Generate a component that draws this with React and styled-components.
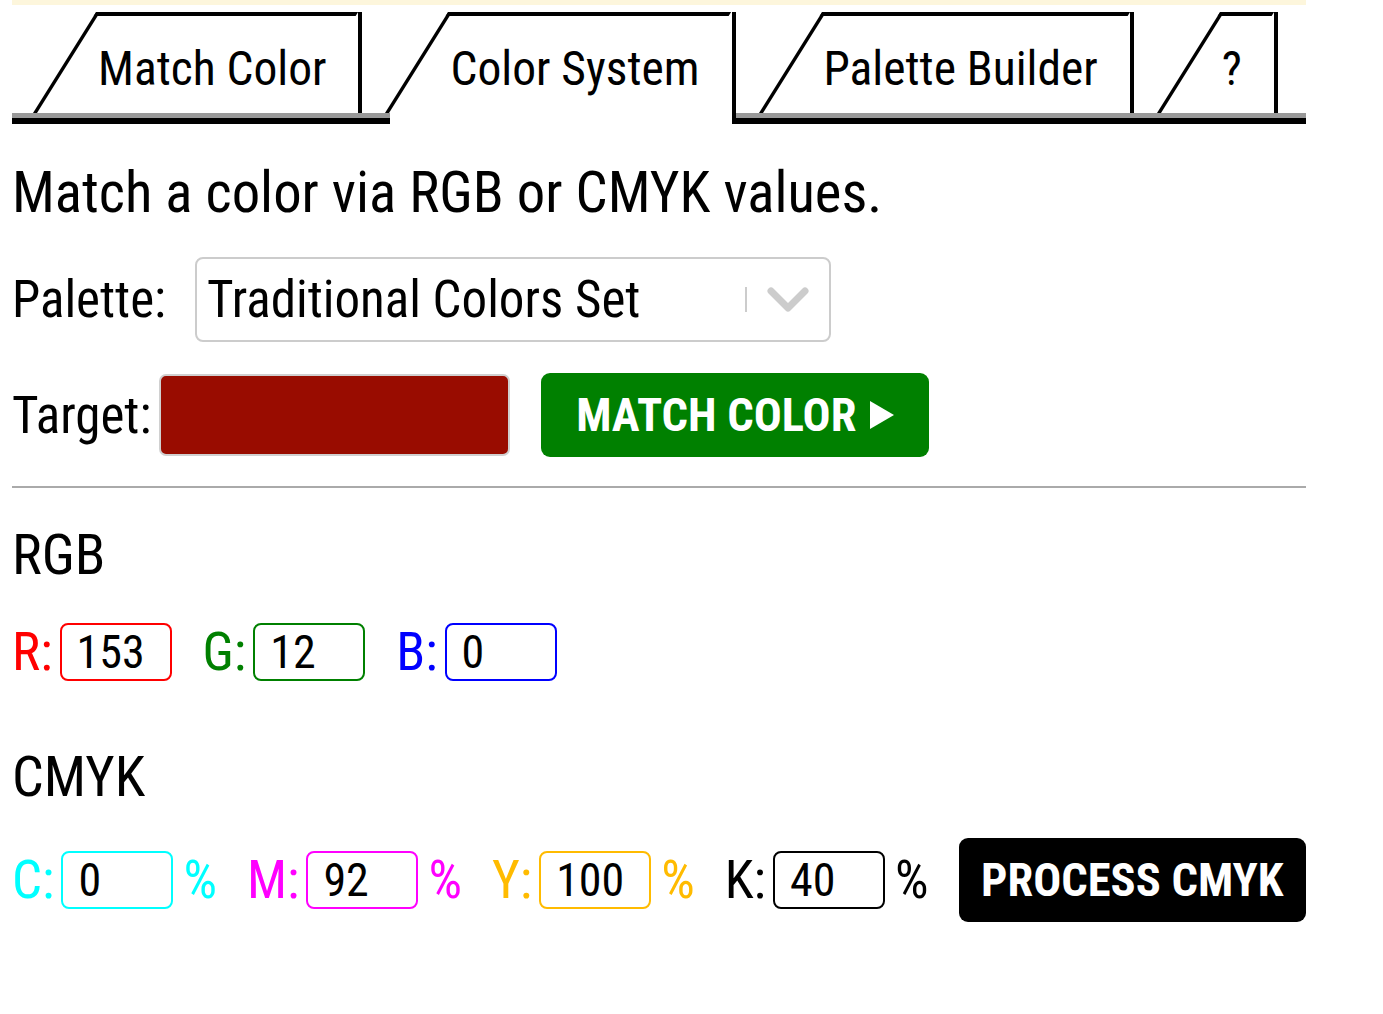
import React from "react";
import styled, { createGlobalStyle } from "styled-components";

const GlobalStyle = createGlobalStyle`
  body {
    margin: 0;
    background: #fff;
    font-family: "Roboto Condensed", "Liberation Sans Narrow", Roboto, sans-serif;
    font-stretch: condensed;
    color: #000;
  }
`;

const Page = styled.div`
  width: 1294px;
  padding: 0 12px;
`;

const TopStrip = styled.div`
  height: 5px;
  background: #fdf6dc;
`;

const TabBar = styled.div`
  display: flex;
  align-items: flex-end;
  gap: 23px;
  margin-top: 7px;
  padding: 0 0 5px 21px;
  border-bottom: 6px solid #000;
  background: linear-gradient(to top, #999 5px, transparent 5px);
`;

const Tab = styled.div`
  position: relative;
  display: flex;
  align-items: center;
  height: 101px;
  box-sizing: border-box;
  padding: 12px 32px 0 65px;
  border-right: 4px solid #000;
  background: #fff;
  font-size: 47.5px;
  white-space: nowrap;
  cursor: pointer;

  &::before {
    content: "";
    position: absolute;
    top: 0;
    bottom: 0;
    left: 0;
    right: 63px;
    border-top: 4px solid #000;
    border-left: 4px solid #000;
    transform: skewX(-32deg);
    transform-origin: bottom left;
  }

  ${(p) =>
    p.$active &&
    `
    &::after {
      content: "";
      position: absolute;
      left: 5px;
      right: -4px;
      bottom: -11px;
      height: 11px;
      background: #fff;
      border-right: 4px solid #000;
    }
  `}
`;

const Intro = styled.p`
  margin: 37px 0 0;
  font-size: 56.7px;
  line-height: 64px;
`;

const Row = styled.div`
  display: flex;
  align-items: center;
  gap: ${(p) => p.$gap || 0}px;
  margin-top: ${(p) => p.$top || 0}px;
`;

const Label = styled.span`
  font-size: ${(p) => p.$size || 53}px;
  color: ${(p) => p.$color || "#000"};
  line-height: 1;
  white-space: nowrap;
`;

const SelectBox = styled.div`
  display: flex;
  align-items: center;
  width: 636px;
  height: 85px;
  box-sizing: border-box;
  border: 2px solid #ccc;
  border-radius: 8px;
  padding-left: 10px;
`;

const SelectValue = styled.span`
  flex: 1;
  font-size: 51px;
  line-height: 1;
`;

const Separator = styled.span`
  width: 2px;
  height: 25px;
  background: #ccc;
`;

const ChevronWrap = styled.span`
  display: flex;
  padding: 0 20px;
`;

const Swatch = styled.div`
  width: 351px;
  height: 82px;
  box-sizing: border-box;
  border: 2px solid #d0d0d0;
  border-radius: 7px;
  background: ${(p) => p.$color};
`;

const ActionButton = styled.button`
  display: flex;
  align-items: center;
  justify-content: center;
  gap: 14px;
  width: ${(p) => p.$width}px;
  height: 84px;
  margin-left: ${(p) => p.$ml || 0}px;
  border: none;
  border-radius: 9px;
  background: ${(p) => p.$bg};
  color: #fff;
  font-family: inherit;
  font-stretch: condensed;
  font-weight: bold;
  font-size: 46.5px;
  white-space: nowrap;
  padding: 0;
  cursor: pointer;
`;

const Divider = styled.hr`
  margin: 29px 0 0;
  border: none;
  height: 2px;
  background: #aaa;
`;

const Heading = styled.h3`
  margin: ${(p) => p.$top}px 0 0;
  font-weight: normal;
  font-size: 56px;
  line-height: 60px;
`;

const Field = styled.div`
  display: flex;
  align-items: center;
  gap: 7px;
`;

const NumInput = styled.input`
  width: 112px;
  height: 58px;
  box-sizing: border-box;
  border: 2px solid ${(p) => p.$color};
  border-radius: 8px;
  padding: 0 0 0 15px;
  font-family: inherit;
  font-stretch: condensed;
  font-size: 46px;
  color: #000;
  background: #fff;
  outline: none;
`;

const Percent = styled.span`
  margin-left: 3px;
  font-size: 53px;
  line-height: 1;
  color: ${(p) => p.$color};
`;

const Chevron = () => (
  <svg width="42" height="26" viewBox="0 0 42 26">
    <path d="M4 4 L21 21 L38 4" fill="none" stroke="#ccc" strokeWidth="7" strokeLinecap="round" strokeLinejoin="round" />
  </svg>
);

const Play = () => (
  <svg width="24" height="28" viewBox="0 0 24 28">
    <path d="M0 0 L24 14 L0 28 Z" fill="#fff" />
  </svg>
);

const tabs = ["Match Color", "Color System", "Palette Builder", "?"];

const rgb = [
  { key: "R", value: "153", color: "#ff0000" },
  { key: "G", value: "12", color: "#008000" },
  { key: "B", value: "0", color: "#0000ff" },
];

const cmyk = [
  { key: "C", value: "0", color: "#00ffff" },
  { key: "M", value: "92", color: "#ff00ff" },
  { key: "Y", value: "100", color: "#ffbb00" },
  { key: "K", value: "40", color: "#000000" },
];

export default function App() {
  return (
    <>
      <GlobalStyle />
      <Page>
        <TopStrip />
        <TabBar>
          {tabs.map((t) => (
            <Tab key={t} $active={t === "Color System"}>
              {t}
            </Tab>
          ))}
        </TabBar>

        <Intro>Match a color via RGB or CMYK values.</Intro>

        <Row $top={32} $gap={29}>
          <Label $size={51}>Palette:</Label>
          <SelectBox>
            <SelectValue>Traditional Colors Set</SelectValue>
            <Separator />
            <ChevronWrap>
              <Chevron />
            </ChevronWrap>
          </SelectBox>
        </Row>

        <Row $top={31} $gap={8}>
          <Label $size={51}>Target:</Label>
          <Swatch $color="#990c00" />
          <ActionButton $bg="#008000" $width={388} $ml={23}>
            MATCH COLOR <Play />
          </ActionButton>
        </Row>

        <Divider />

        <Heading $top={37}>RGB</Heading>
        <Row $top={38} $gap={31}>
          {rgb.map((c) => (
            <Field key={c.key}>
              <Label $color={c.color}>{c.key}:</Label>
              <NumInput $color={c.color} defaultValue={c.value} />
            </Field>
          ))}
        </Row>

        <Heading $top={66}>CMYK</Heading>
        <Row $top={31} $gap={30}>
          {cmyk.map((c) => (
            <Field key={c.key}>
              <Label $color={c.color}>{c.key}:</Label>
              <NumInput $color={c.color} defaultValue={c.value} />
              <Percent $color={c.color}>%</Percent>
            </Field>
          ))}
          <ActionButton $bg="#000" $width={349}>
            PROCESS CMYK
          </ActionButton>
        </Row>
      </Page>
    </>
  );
}
